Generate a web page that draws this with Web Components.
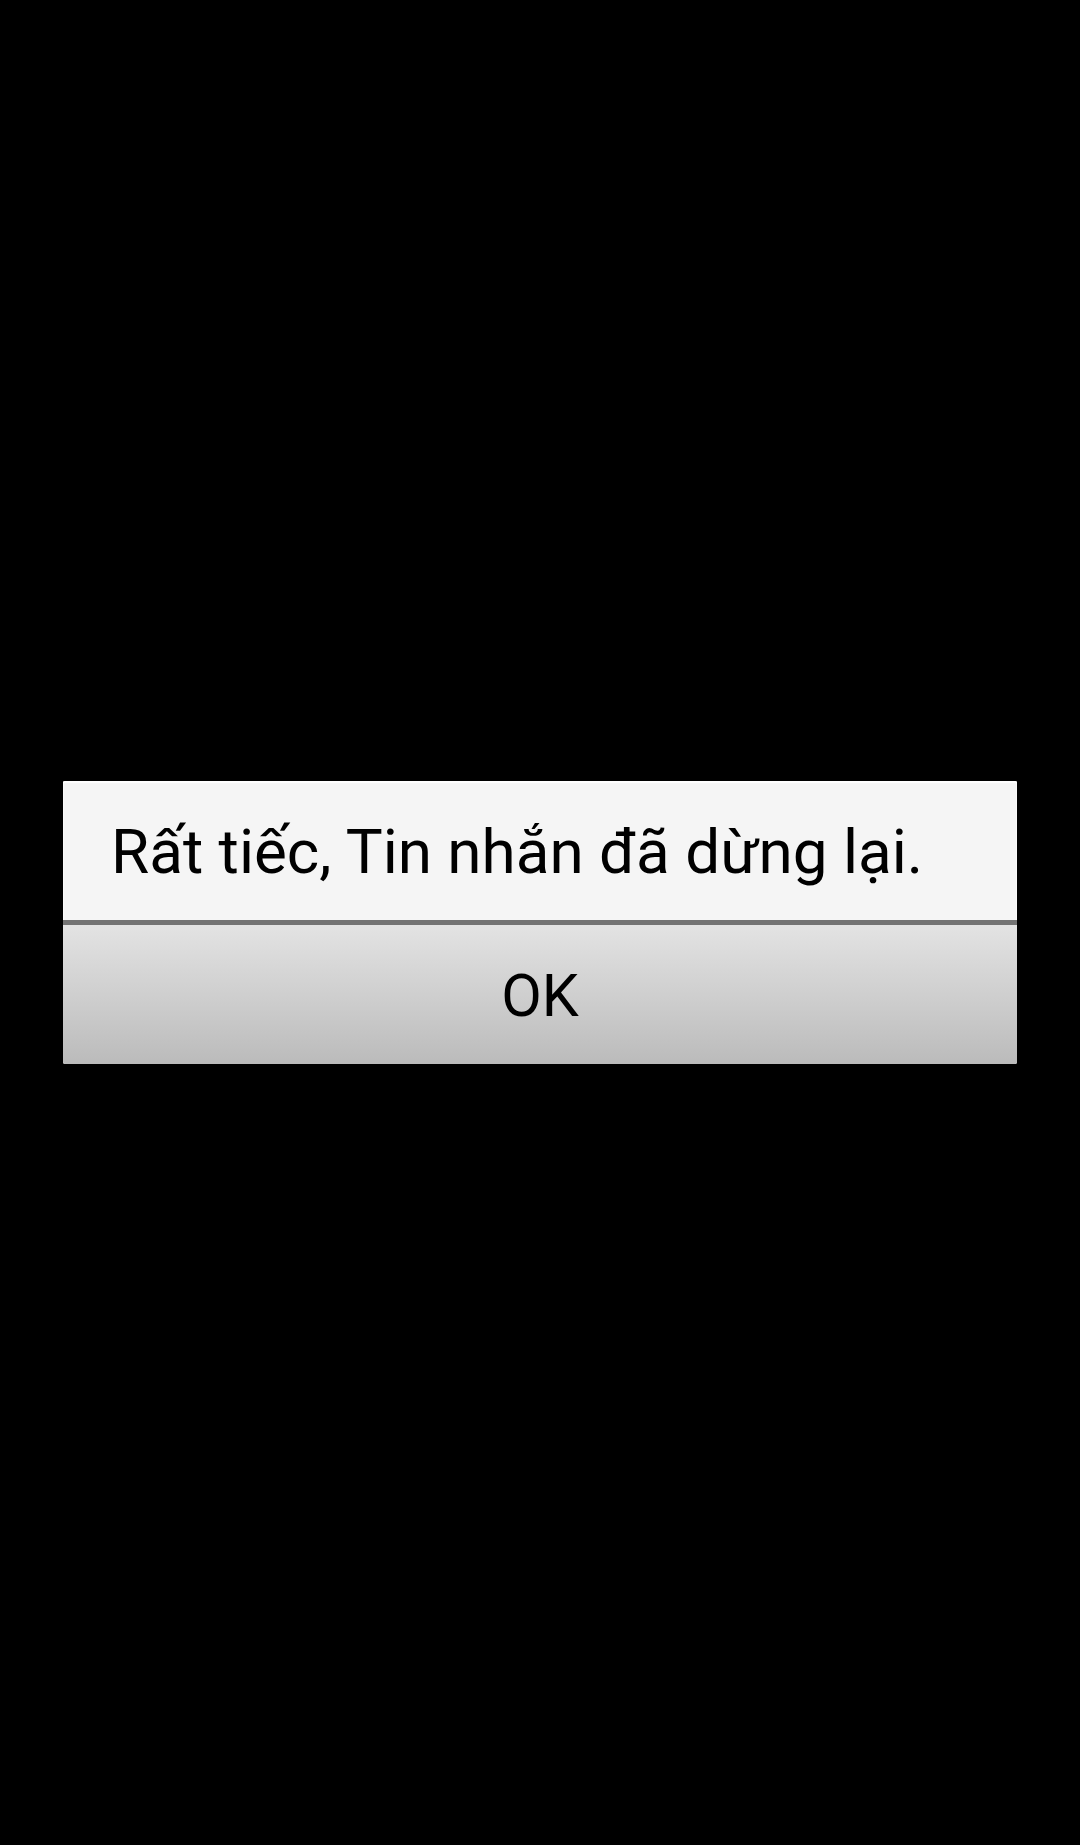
<!DOCTYPE html>
<html lang="vi">
<head>
	<meta charset="UTF-8" />
	<meta name="viewport" content="width=device-width, initial-scale=1" />
	<title>Tin nhắn</title>
	<style>
		body {
			margin: 0;
			background-color: #000000;
			font-family: Roboto, "Noto Sans", sans-serif;
		}
	</style>
</head>
<body>
	<alert-screen>
		<alert-dialog>
			Rất tiếc, Tin nhắn đã dừng lại.
			<dialog-button slot="actions">OK</dialog-button>
		</alert-dialog>
	</alert-screen>

	<script>
		const screenTemplate = document.createElement('template');
		screenTemplate.innerHTML = `
			<style>
				:host {
					display: flex;
					align-items: center;
					box-sizing: border-box;
					min-height: 100vh;
					padding: 0 63px;
				}
			</style>

			<slot></slot>
		`;

		class AlertScreen extends HTMLElement {
			constructor() {
				super();
				this.attachShadow({ mode: 'open' });
				this.shadowRoot.appendChild(screenTemplate.content.cloneNode(true));
			}
		}

		customElements.define('alert-screen', AlertScreen);

		const dialogTemplate = document.createElement('template');
		dialogTemplate.innerHTML = `
			<style>
				:host {
					display: block;
					flex: 1;
					min-width: 0;
					color: #000000;
				}

				.dialog {
					overflow: hidden;
					border-radius: 2px;
					background-color: #f5f5f5;
				}

				.message {
					margin: 0;
					padding: 35px 48px 32px;
					font-size: 62px;
					line-height: 72px;
					box-shadow: inset 0 2px 1px #ffffff, inset 1px 0 #fafafa, inset -1px 0 #fafafa;
				}

				.actions {
					display: flex;
					border-top: 5px solid #737373;
				}
			</style>

			<div class="dialog" role="alertdialog" aria-labelledby="message">
				<p class="message" id="message"><slot></slot></p>
				<div class="actions"><slot name="actions"></slot></div>
			</div>
		`;

		class AlertDialog extends HTMLElement {
			constructor() {
				super();
				this.attachShadow({ mode: 'open' });
				this.shadowRoot.appendChild(dialogTemplate.content.cloneNode(true));
			}
		}

		customElements.define('alert-dialog', AlertDialog);

		const buttonTemplate = document.createElement('template');
		buttonTemplate.innerHTML = `
			<style>
				:host {
					display: flex;
					flex: 1;
				}

				button {
					flex: 1;
					margin: 0;
					padding: 35px 48px 32px;
					border: none;
					background: linear-gradient(#e3e3e3, #bbbbbb);
					color: inherit;
					font-family: inherit;
					font-size: 59px;
					line-height: 72px;
					cursor: pointer;
				}

				button:active {
					background: #bbbbbb;
				}
			</style>

			<button type="button"><slot></slot></button>
		`;

		class DialogButton extends HTMLElement {
			constructor() {
				super();
				this.attachShadow({ mode: 'open' });
				this.shadowRoot.appendChild(buttonTemplate.content.cloneNode(true));
			}
		}

		customElements.define('dialog-button', DialogButton);
	</script>
</body>
</html>
